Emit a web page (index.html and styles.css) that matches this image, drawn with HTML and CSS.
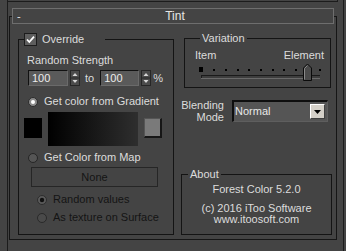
FILE: index.html
```html
<!DOCTYPE html>
<html>
<head>
<meta charset="utf-8">
<link rel="stylesheet" href="styles.css">
</head>
<body>
<div class="outer">
  <div class="prev"></div>
  <div class="title"><span class="collapse">-</span><span class="title-text">Tint</span></div>
  <div class="rollout">
    <fieldset class="group override">
      <legend class="check-legend">
        <svg class="checkbox" width="13" height="13" viewBox="0 0 13 13"><rect x="0.5" y="0.5" width="12" height="12" fill="#5e5e5e" stroke="#1c1c1c"/><path d="M3 6.5 L5.3 9 L10 3.6" fill="none" stroke="#ffffff" stroke-width="1.8"/></svg>
        <span>Override</span>
      </legend>
      <div class="strength">Random Strength</div>
      <div class="spin-row">
        <div class="field f1">100</div>
        <svg class="arrows" width="10" height="16" viewBox="0 0 10 16"><rect x="0.5" y="0.5" width="9" height="15" fill="#4b4b4b" stroke="#262626"/><line x1="1" y1="8" x2="9" y2="8" stroke="#262626"/><polygon points="2.5,6 5,3 7.5,6" fill="#d6d6d6"/><polygon points="2.5,10 7.5,10 5,13" fill="#d6d6d6"/></svg>
        <span class="to">to</span>
        <div class="field f2">100</div>
        <svg class="arrows" width="10" height="16" viewBox="0 0 10 16"><rect x="0.5" y="0.5" width="9" height="15" fill="#4b4b4b" stroke="#262626"/><line x1="1" y1="8" x2="9" y2="8" stroke="#262626"/><polygon points="2.5,6 5,3 7.5,6" fill="#d6d6d6"/><polygon points="2.5,10 7.5,10 5,13" fill="#d6d6d6"/></svg>
        <span class="pct">%</span>
      </div>
      <div class="radio-row grad">
        <svg class="radio" width="10" height="10" viewBox="0 0 10 10"><circle cx="5" cy="5" r="4.5" fill="#8c8c8c" stroke="#2c2c2c"/><circle cx="5" cy="5" r="2" fill="#ffffff"/></svg>
        <span>Get color from Gradient</span>
      </div>
      <div class="gradient-row">
        <div class="swatch black"></div>
        <div class="ramp"></div>
        <div class="swatch gray"></div>
      </div>
      <div class="radio-row map">
        <svg class="radio" width="10" height="10" viewBox="0 0 10 10"><circle cx="5" cy="5" r="4.5" fill="#555555" stroke="#262626"/></svg>
        <span>Get Color from Map</span>
      </div>
      <div class="map-btn">None</div>
      <div class="radio-row sub disabled">
        <svg class="radio" width="10" height="10" viewBox="0 0 10 10"><circle cx="5" cy="5" r="4.5" fill="#5a5a5a" stroke="#2e2e2e"/><circle cx="5" cy="5" r="2.2" fill="#111111"/></svg>
        <span>Random values</span>
      </div>
      <div class="radio-row sub disabled">
        <svg class="radio" width="10" height="10" viewBox="0 0 10 10"><circle cx="5" cy="5" r="4.5" fill="#4a4a4a" stroke="#2a2a2a"/></svg>
        <span>As texture on Surface</span>
      </div>
    </fieldset>
    <div class="right">
      <fieldset class="group variation">
        <legend>Variation</legend>
        <div class="ends"><span>Item</span><span>Element</span></div>
        <svg class="slider" width="130" height="19" viewBox="0 0 130 19">
          <rect x="6" y="12" width="119" height="4" fill="#3e3e3e"/>
          <line x1="6" y1="12.5" x2="125" y2="12.5" stroke="#1a1a1a"/>
          <line x1="6.5" y1="12" x2="6.5" y2="16" stroke="#1a1a1a"/>
          <line x1="6" y1="15.5" x2="125" y2="15.5" stroke="#6a6a6a"/>
          <rect x="4" y="4" width="4" height="5" fill="#000"/>
          <g fill="#000">
            <rect x="18" y="6" width="2" height="2"/>
            <rect x="30" y="6" width="2" height="2"/>
            <rect x="42" y="6" width="2" height="2"/>
            <rect x="53" y="6" width="2" height="2"/>
            <rect x="65" y="6" width="2" height="2"/>
            <rect x="77" y="6" width="2" height="2"/>
            <rect x="88" y="6" width="2" height="2"/>
            <rect x="100" y="6" width="2" height="2"/>
            <rect x="124" y="6" width="2" height="2"/>
          </g>
          <polygon points="108.5,17.5 108.5,5 112.5,1 116.5,5 116.5,17.5" fill="#4a4a4a" stroke="#0a0a0a"/>
          <polyline points="109.5,16.5 109.5,5.5 112.5,2.5" fill="none" stroke="#8a8a8a"/>
        </svg>
      </fieldset>
      <div class="blend">
        <div class="blend-label">Blending<br>Mode</div>
        <div class="select">
          <span class="sel-text">Normal</span>
          <span class="drop"><svg width="7" height="4" viewBox="0 0 7 4"><polygon points="0,0 7,0 3.5,4" fill="#000"/></svg></span>
        </div>
      </div>
      <fieldset class="group about">
        <legend>About</legend>
        <p class="l1">Forest Color 5.2.0</p>
        <p class="l2">(c) 2016 iToo Software</p>
        <p class="l3">www.itoosoft.com</p>
      </fieldset>
    </div>
  </div>
</div>
</body>
</html>
```

FILE: styles.css
```css
* {
  box-sizing: border-box;
  margin: 0;
  padding: 0;
}

html,
body {
  width: 346px;
  height: 251px;
  overflow: hidden;
  background: #444444;
}

body {
  font-family: "Liberation Sans", Arial, sans-serif;
  font-size: 11px;
  line-height: 13px;
  color: #dcdcdc;
}

.outer {
  margin-left: 7px;
  width: 337px;
  height: 251px;
  border-left: 1px solid #1c1c1c;
  border-right: 1px solid #1c1c1c;
}

.prev {
  height: 2px;
  width: 330px;
  border-right: 1px solid #1c1c1c;
  border-bottom: 1px solid #1c1c1c;
}

.title {
  position: relative;
  z-index: 1;
  margin-top: 6px;
  margin-left: 4px;
  width: 322px;
  height: 16px;
  border: 1px solid #6e6e6e;
  background: #444444;
  display: flex;
  align-items: center;
  line-height: 14px;
}

.collapse {
  width: 0;
  margin-left: 4px;
  color: #e8e8e8;
}

.title-text {
  flex: 1;
  text-align: center;
  color: #e6e6e6;
  font-size: 12px;
}

.rollout {
  margin-top: -8px;
  margin-left: 1px;
  width: 328px;
  height: 224px;
  border: 1px solid #161616;
  display: flex;
  align-items: flex-start;
  padding: 15px 0 0 8px;
}

.group {
  border: 1px solid #141414;
  min-width: 0;
}

.group legend {
  line-height: 13px;
}

.override {
  width: 156px;
  margin-top: 1px;
  padding-bottom: 10px;
}

.check-legend {
  margin-left: 5px;
  padding-right: 21px;
  display: flex;
  align-items: center;
}

.checkbox {
  display: block;
  margin-right: 5px;
}

.strength {
  margin-top: 8px;
  margin-left: 8px;
}

.spin-row {
  margin-top: 3px;
  margin-left: 9px;
  height: 16px;
  display: flex;
  align-items: center;
}

.field {
  height: 16px;
  background: #5a5a5a;
  border-top: 1px solid #111111;
  border-left: 1px solid #111111;
  border-right: 1px solid #6a6a6a;
  border-bottom: 1px solid #6a6a6a;
  color: #ececec;
  padding-left: 3px;
  line-height: 14px;
}

.f1 {
  width: 40px;
}

.f2 {
  width: 39px;
}

.arrows {
  display: block;
  margin-left: 2px;
}

.to {
  margin-left: 5px;
  margin-right: 6px;
}

.pct {
  margin-left: 2px;
}

.radio-row {
  display: flex;
  align-items: center;
  height: 13px;
}

.radio {
  display: block;
  margin-right: 6px;
}

.grad {
  margin-top: 9px;
  padding-left: 9px;
}

.gradient-row {
  margin-top: 4px;
  margin-left: 5px;
  height: 34px;
  display: flex;
  align-items: flex-start;
}

.swatch {
  width: 18px;
  height: 20px;
  margin-top: 6px;
}

.black {
  background: #000000;
}

.ramp {
  margin-left: 6px;
  width: 90px;
  height: 34px;
  background: linear-gradient(to right, #000000, #2e2e2e);
}

.gray {
  margin-left: 6px;
  width: 18px;
  background: #7a7a7a;
  border-right: 2px solid #161616;
  border-bottom: 2px solid #161616;
  border-top: 1px solid #555555;
  border-left: 1px solid #555555;
}

.map {
  margin-top: 5px;
  padding-left: 9px;
}

.map-btn {
  margin-top: 3px;
  margin-left: 12px;
  width: 127px;
  height: 20px;
  border: 1px solid #262626;
  color: #141414;
  text-align: center;
  line-height: 18px;
}

.sub {
  padding-left: 18px;
}

.disabled {
  color: #141414;
}

.sub + .sub {
  margin-top: 5px;
}

.map-btn + .sub {
  margin-top: 6px;
}

.right {
  margin-left: 7px;
  width: 151px;
  display: flex;
  flex-direction: column;
}

.variation {
  margin-left: 3px;
  width: 147px;
  padding: 0 6px 5px 10px;
}

.variation legend {
  margin-left: 5px;
  padding: 0 2px;
}

.ends {
  margin-top: 4px;
  display: flex;
  justify-content: space-between;
}

.slider {
  display: block;
  margin-top: 1px;
}

.blend {
  margin-top: 11px;
  display: flex;
  align-items: flex-start;
}

.blend-label {
  width: 43px;
  text-align: right;
  line-height: 12px;
}

.select {
  margin-top: 1px;
  margin-left: 8px;
  width: 96px;
  height: 22px;
  background: #555555;
  border-top: 2px solid #0e0e0e;
  border-left: 2px solid #0e0e0e;
  border-right: 1px solid #5e5e5e;
  border-bottom: 1px solid #5e5e5e;
  display: flex;
  align-items: center;
  padding-left: 1px;
}

.sel-text {
  flex: 1;
  color: #e8e8e8;
}

.drop {
  width: 15px;
  height: 15px;
  margin-right: 2px;
  background: #d4d0c8;
  border-top: 1px solid #ffffff;
  border-left: 1px solid #ffffff;
  border-right: 1px solid #404040;
  border-bottom: 1px solid #404040;
  display: flex;
  align-items: center;
  justify-content: center;
}

.drop svg {
  display: block;
}

.about {
  margin-top: 45px;
  width: 151px;
  padding-bottom: 9px;
  text-align: center;
  line-height: 11px;
}

.about legend {
  margin-left: 6px;
  padding: 0 2px;
  text-align: left;
}

.about p {
  line-height: 11px;
}

.l1 {
  margin-top: 3px;
}

.l2 {
  margin-top: 8px;
}
```
